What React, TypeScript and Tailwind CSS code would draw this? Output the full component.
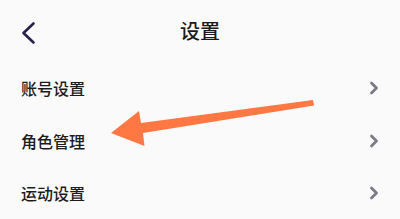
import React from "react";

const Chevron = () => (
  <svg width="10" height="14" viewBox="0 0 10 14" className="block">
    <path d="M2.5 2 L7.5 7 L2.5 12" fill="none" stroke="#7b7a88" strokeWidth="2.8" strokeLinecap="round" strokeLinejoin="round" />
  </svg>
);

const Row = ({ label }: { label: string }) => (
  <div className="flex h-[52.5px] items-center justify-between pl-[21px] pr-[21px]">
    <span className="text-[16px] font-medium leading-none text-[#1c1c1c]">{label}</span>
    <Chevron />
  </div>
);

export default function App() {
  return (
    <div
      className="relative h-[219px] w-[400px] overflow-hidden bg-[#fafafa]"
      style={{ fontFamily: '"Noto Sans CJK SC", "Noto Sans", sans-serif' }}
    >
      <div className="relative flex h-[62px] items-center justify-center">
        <svg width="16" height="24" viewBox="0 0 16 24" className="absolute left-[20px] top-[20.5px]">
          <path d="M13.5 2.5 L3.5 12 L13.5 21.5" fill="none" stroke="#26234a" strokeWidth="2.6" strokeLinecap="round" strokeLinejoin="round" />
        </svg>
        <span className="text-[20px] font-medium leading-none text-[#1a1a1a]">设置</span>
      </div>
      <Row label="账号设置" />
      <Row label="角色管理" />
      <Row label="运动设置" />
      <svg width="400" height="219" viewBox="0 0 400 219" className="pointer-events-none absolute left-0 top-0">
        <polygon
          points="313,100 314,105.5 143,133 144.5,146 111,133 139,111 141,123"
          fill="#ff7743"
        />
      </svg>
    </div>
  );
}
